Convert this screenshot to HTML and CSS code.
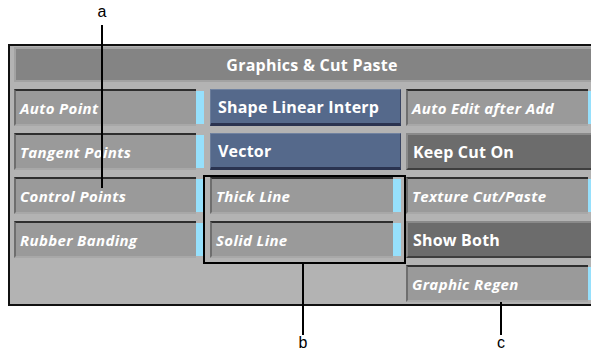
FILE: index.html
```html
<!DOCTYPE html>
<html>
<head>
<meta charset="utf-8">
<link rel="stylesheet" href="styles.css">
</head>
<body>
<div class="page">
  <div class="panel">
    <div class="title">Graphics &amp; Cut Paste</div>
    <div class="grid">
      <div class="cell"><div class="btn gray">Auto Point</div><div class="strip"></div></div>
      <div class="cell"><div class="btn blue">Shape Linear Interp</div></div>
      <div class="cell"><div class="btn gray">Auto Edit after Add</div><div class="strip"></div></div>

      <div class="cell"><div class="btn gray">Tangent Points</div><div class="strip"></div></div>
      <div class="cell"><div class="btn blue">Vector</div></div>
      <div class="cell"><div class="btn dark">Keep Cut On</div></div>

      <div class="cell"><div class="btn gray">Control Points</div><div class="strip"></div></div>
      <div class="cell inset"><div class="btn gray">Thick Line</div><div class="strip"></div></div>
      <div class="cell"><div class="btn gray">Texture Cut/Paste</div><div class="strip"></div></div>

      <div class="cell"><div class="btn gray">Rubber Banding</div><div class="strip"></div></div>
      <div class="cell inset"><div class="btn gray">Solid Line</div><div class="strip"></div></div>
      <div class="cell"><div class="btn dark">Show Both</div></div>

      <div class="cell empty"></div>
      <div class="cell empty"></div>
      <div class="cell"><div class="btn gray">Graphic Regen</div><div class="strip"></div></div>
    </div>
  </div>

  <div class="callout-a">
    <span class="label">a</span>
    <span class="vline"></span>
  </div>
  <div class="bracket"></div>
  <div class="callout-b">
    <span class="vline"></span>
    <span class="label">b</span>
  </div>
  <div class="callout-c">
    <span class="vline"></span>
    <span class="label">c</span>
  </div>
</div>
</body>
</html>
```

FILE: styles.css
```css
html, body {
  margin: 0;
  padding: 0;
  background: #ffffff;
  overflow: hidden;
}

.page {
  position: relative;
  width: 591px;
  height: 351px;
  overflow: hidden;
  padding-top: 44px;
  box-sizing: border-box;
  font-family: "Open Sans", "DejaVu Sans", sans-serif;
}

.panel {
  margin-left: 8px;
  width: 600px;
  background: #b3b3b3;
  border: 2px solid #111;
  border-right: none;
  padding: 1px 0 2px 4px;
  box-sizing: border-box;
}

.title {
  height: 35px;
  background: #848484;
  border: 2px solid #a2a2a2;
  border-right: none;
  box-sizing: border-box;
  color: #fff;
  font-weight: 700;
  font-size: 16px;
  display: flex;
  align-items: center;
  justify-content: center;
  letter-spacing: 0.25px;
}

.grid {
  margin-top: 7px;
  display: grid;
  grid-template-columns: 190px 192px 190px;
  grid-auto-rows: 37px;
  column-gap: 5px;
  row-gap: 7px;
}

.grid > .cell:nth-child(3n+2) {
  margin-left: 1px;
}

.cell {
  display: flex;
  min-width: 0;
}

.btn {
  flex: 1;
  display: flex;
  align-items: center;
  box-sizing: border-box;
  color: #fff;
  font-size: 16px;
  font-weight: 700;
  white-space: nowrap;
  overflow: hidden;
  letter-spacing: 0.2px;
}

.gray {
  background: #9a9a9a;
  border-top: 2px solid #2e2e2e;
  border-left: 2px solid #6e6e6e;
  border-bottom: 2px solid #a8a8a8;
  padding-left: 4px;
  font-style: italic;
  font-size: 15px;
  letter-spacing: 0.35px;
}

.dark {
  background: #6c6c6c;
  border-top: 2px solid #8a8a8a;
  border-left: 2px solid #8a8a8a;
  border-bottom: 2px solid #3e3e3e;
  border-right: 2px solid #4a4a4a;
  padding-left: 5px;
}

.blue {
  background: #55698b;
  border-top: 1px solid #7082a0;
  border-left: 1px solid #6a7c9a;
  border-bottom: 3px solid #2a3350;
  border-right: 1px solid #3a4562;
  padding-left: 7px;
  padding-top: 1px;
}

.strip {
  width: 8px;
  background: #96e0fc;
  border-top: 2px solid #b3b3b3;
  border-bottom: 2px solid #b3b3b3;
  box-sizing: border-box;
  flex: none;
}

/* callouts */
.label {
  font-family: "Liberation Sans", Arial, sans-serif;
  font-size: 16px;
  color: #000;
  line-height: 1;
}

.vline {
  display: block;
  width: 2px;
  background: #000;
}

.callout-a {
  position: absolute;
  left: 95px;
  top: 4px;
  display: flex;
  flex-direction: column;
  align-items: center;
  width: 14px;
}

.callout-a .vline {
  height: 163px;
  margin-top: 5px;
}

.bracket {
  position: absolute;
  left: 203px;
  top: 175px;
  width: 199px;
  height: 85px;
  border: 2px solid #000;
}

.callout-b {
  position: absolute;
  left: 296px;
  top: 262px;
  width: 14px;
  display: flex;
  flex-direction: column;
  align-items: center;
}

.callout-b .vline {
  height: 73px;
}

.callout-c {
  position: absolute;
  left: 494px;
  top: 302px;
  width: 14px;
  display: flex;
  flex-direction: column;
  align-items: center;
}

.callout-c .vline {
  height: 33px;
}
```
